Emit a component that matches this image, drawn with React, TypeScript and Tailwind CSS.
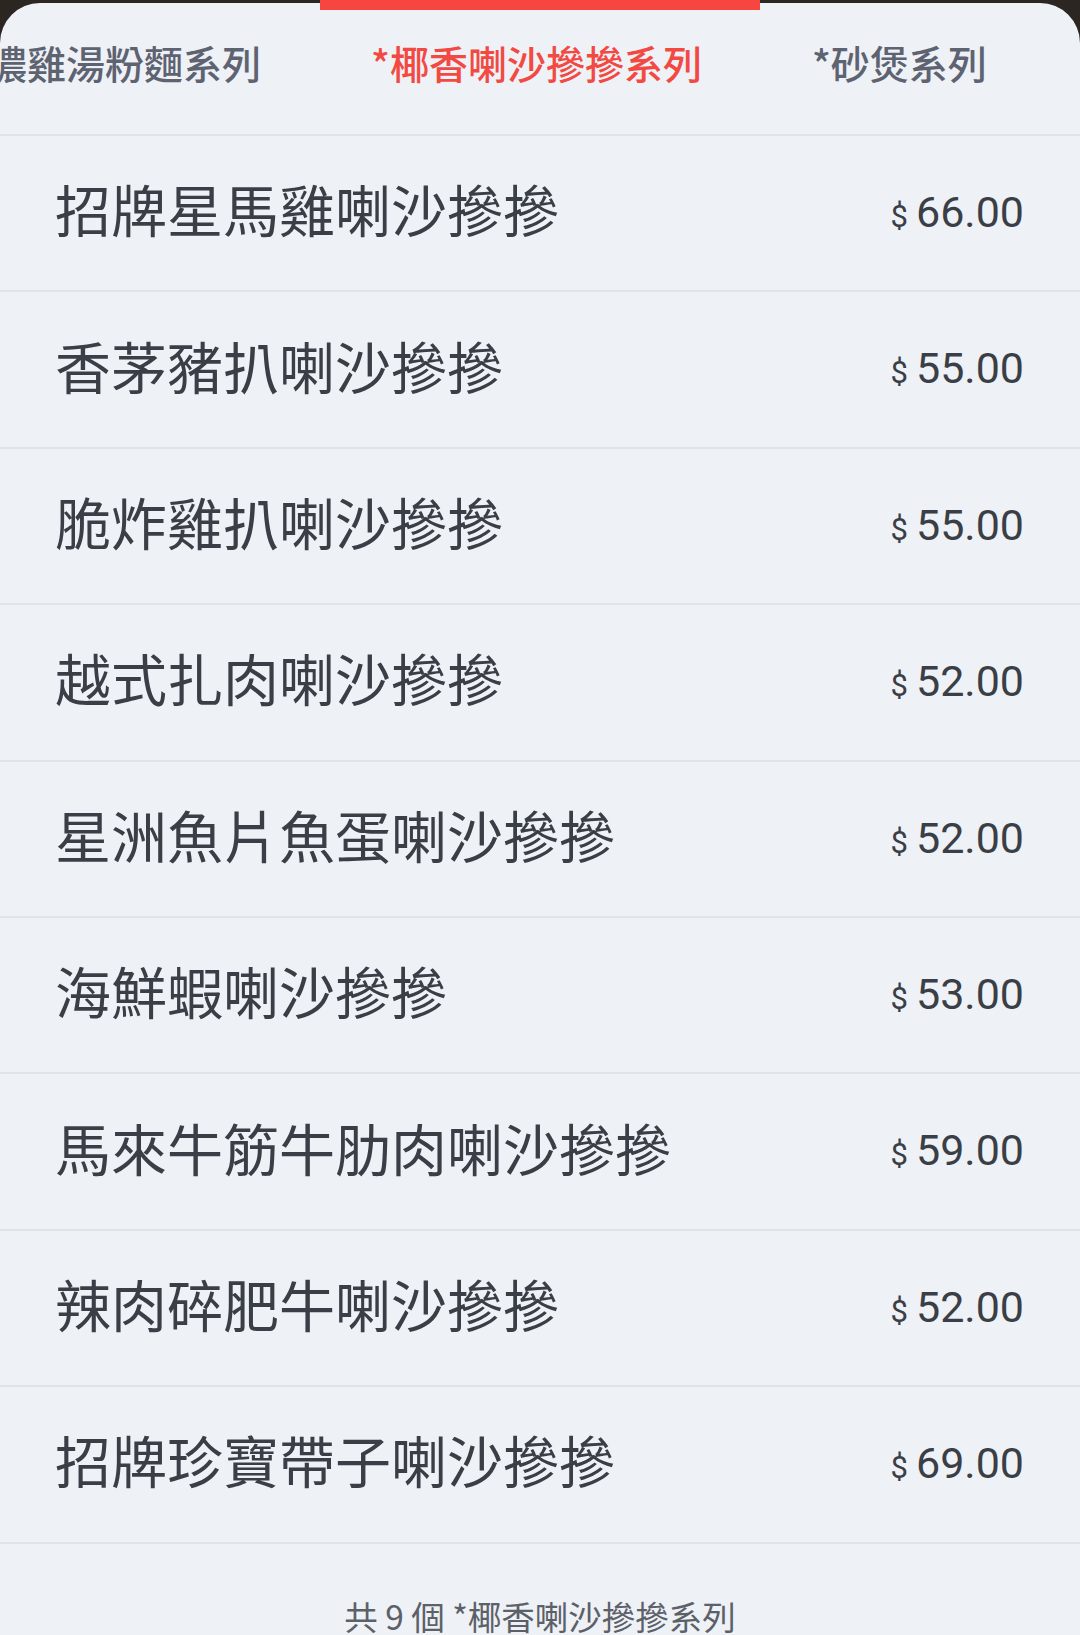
import { FC } from "react";

const tabs = ["濃雞湯粉麵系列", "*椰香喇沙摻摻系列", "*砂煲系列"];
const activeTab = 1;

const items = [
  { name: "招牌星馬雞喇沙摻摻", price: "66.00" },
  { name: "香茅豬扒喇沙摻摻", price: "55.00" },
  { name: "脆炸雞扒喇沙摻摻", price: "55.00" },
  { name: "越式扎肉喇沙摻摻", price: "52.00" },
  { name: "星洲魚片魚蛋喇沙摻摻", price: "52.00" },
  { name: "海鮮蝦喇沙摻摻", price: "53.00" },
  { name: "馬來牛筋牛肋肉喇沙摻摻", price: "59.00" },
  { name: "辣肉碎肥牛喇沙摻摻", price: "52.00" },
  { name: "招牌珍寶帶子喇沙摻摻", price: "69.00" },
];

const cjk = "font-['Noto_Sans_CJK_TC','Noto_Sans',sans-serif]";

const App: FC = () => {
  return (
    <div className="relative w-[1080px] h-[1635px] overflow-hidden bg-[#2b2622]">
      {/* red button peeking from above */}
      <div className="absolute top-0 left-[320px] w-[440px] h-[10px] bg-[#f6463f] z-10"></div>

      <div className={`mt-[3px] h-[1632px] rounded-t-[40px] bg-[#eef1f5] ${cjk}`}>
        {/* tabs */}
        <div className="h-[133px] border-b-2 border-[#e0e3e8] overflow-hidden">
          <div className="flex items-center h-[118px] ml-[-12px] gap-[110px] whitespace-nowrap">
            {tabs.map((t, i) => (
              <div
                key={t}
                className={`text-[39px] font-medium leading-none ${
                  i === activeTab ? "text-[#f24a43]" : "text-[#5e6372]"
                }`}
              >
                {t}
              </div>
            ))}
          </div>
        </div>

        {/* items */}
        {items.map((it) => (
          <div
            key={it.name}
            className="h-[156.4px] border-b-2 border-[#e0e3e8] flex items-center justify-between pl-[55px] pr-[56px]"
          >
            <div className="text-[56px] leading-none text-[#3a3e46] pb-[10px]">
              {it.name}
            </div>
            <div className="flex items-baseline font-['Roboto',sans-serif] text-[#3a3e46] pb-[2px]">
              <span className="text-[31px] mr-[8px]">$</span>
              <span className="text-[43px]">{it.price}</span>
            </div>
          </div>
        ))}

        {/* footer */}
        <div className="pt-[55px] text-center text-[33.5px] leading-none text-[#5c6069] whitespace-pre">
          共 9 個 *椰香喇沙摻摻系列
        </div>
      </div>
    </div>
  );
};

export default App;
